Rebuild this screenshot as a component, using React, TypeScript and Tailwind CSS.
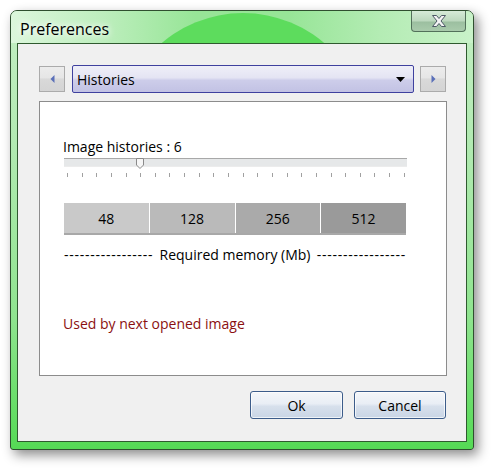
import React from "react";

const ticks = Array.from({ length: 24 }, (_, i) => i);

const sizes = [
  { label: "48", bg: "bg-[#c9c9c9]" },
  { label: "128", bg: "bg-[#bababa]" },
  { label: "256", bg: "bg-[#aaaaaa]" },
  { label: "512", bg: "bg-[#9a9a9a]" },
];

function ArrowButton({ dir }: { dir: "left" | "right" }) {
  return (
    <div className="w-[26px] h-[26px] border border-[#ababab] bg-[linear-gradient(180deg,#ececec_0%,#e6e6e6_45%,#d9d9d9_50%,#d4d4d4_100%)] flex items-center justify-center">
      <svg width="5" height="8" viewBox="0 0 5 8">
        {dir === "left" ? (
          <path d="M4.5 0 L0.5 4 L4.5 8 Z" fill="#5a6fb8" />
        ) : (
          <path d="M0.5 0 L4.5 4 L0.5 8 Z" fill="#5a6fb8" />
        )}
      </svg>
    </div>
  );
}

function DialogButton({ label, width }: { label: string; width: string }) {
  return (
    <button
      className={`${width} h-[28px] rounded-[3px] border border-[#3c5c8a] bg-[linear-gradient(180deg,#f4f6f9_0%,#e9eef5_45%,#d7e0ec_55%,#c9d5e5_100%)] shadow-[inset_0_0_0_1px_rgba(255,255,255,0.7)] text-[14px] text-black`}
    >
      {label}
    </button>
  );
}

export default function App() {
  return (
    <div className="w-[493px] h-[468px] bg-white font-['Open_Sans',sans-serif] pt-[10px] pl-[10px]">
      {/* window */}
      <div className="w-[464px] h-[440px] rounded-t-[7px] rounded-b-[3px] border border-[#2f4f2f] bg-[linear-gradient(180deg,#c3eec3_0%,#b2eab2_30%,#8fe48f_70%,#55da55_100%)] shadow-[4px_5px_12px_rgba(0,0,0,0.45)] flex flex-col">
        {/* title bar */}
        <div className="relative h-[32px] overflow-hidden rounded-t-[6px] bg-[linear-gradient(90deg,#dcf7dc_0%,#bdeebd_20%,#97e597_40%,#97e597_60%,#b4ecb4_80%,#c9f2c9_100%)]">
          <div className="absolute left-[107px] top-[2px] w-[250px] h-[250px] rounded-full bg-[#5ddc5d]" />
          <div className="relative flex items-center h-full pl-[9px]">
            <span className="text-[16px] leading-none text-black mt-[3px] [text-shadow:0_0_6px_#ffffff,0_0_8px_#ffffff]">
              Preferences
            </span>
          </div>
          {/* close button */}
          <div className="absolute right-[7px] top-0 w-[55px] h-[21px] rounded-b-[4px] border border-t-0 border-[#52705a] bg-[linear-gradient(180deg,#d6ebd8_0%,#bcd8be_50%,#9cbfa0_55%,#a9cbac_100%)] flex items-center justify-center">
            <svg width="18" height="14" viewBox="0 0 18 14">
              <path
                d="M2.5 1.5 L6.5 1.5 L9 4.5 L11.5 1.5 L15.5 1.5 L11 7 L15.5 12.5 L11.5 12.5 L9 9.5 L6.5 12.5 L2.5 12.5 L7 7 Z"
                fill="#f4f4f4"
                stroke="#4d5a66"
                strokeWidth="1"
                strokeLinejoin="round"
              />
            </svg>
          </div>
        </div>

        {/* client area */}
        <div className="mx-[6px] mb-[7px] flex-1 border border-[#2f5a2f] bg-[#f0f0f0] flex flex-col pt-[21px] pl-[21px] pr-[20px]">
          {/* combo row */}
          <div className="flex items-center">
            <ArrowButton dir="left" />
            <div className="ml-[7px] mr-[6px] w-[342px] h-[28px] rounded-[2px] border border-[#3f419f] bg-[linear-gradient(180deg,#efeff8_0%,#e4e4f3_45%,#cdcdea_55%,#c2c2e4_100%)] flex items-center justify-between pl-[4px] pr-[8px]">
              <span className="text-[14px] text-black">Histories</span>
              <svg width="9" height="5" viewBox="0 0 9 5">
                <path d="M0 0 L9 0 L4.5 5 Z" fill="#000" />
              </svg>
            </div>
            <ArrowButton dir="right" />
          </div>

          {/* panel */}
          <div className="mt-[8px] w-[408px] h-[275px] border border-[#8c8c8c] bg-white flex flex-col pl-[23px] pr-[39px]">
            <div className="mt-[36px] text-[14px] leading-[18px] text-black">Image histories : 6</div>

            {/* slider */}
            <div className="relative mt-[2px] ml-[1px] h-[9px] border-t border-[#a8a8a8] border-b border-b-[#ececec] bg-[#e6e8e9] w-[343px]">
              <svg className="absolute left-[72px] top-[-1px]" width="8" height="11" viewBox="0 0 8 11">
                <path d="M0.5 0.5 L7.5 0.5 L7.5 7 L4 10.5 L0.5 7 Z" fill="#f6f6f6" stroke="#8a8a8a" />
              </svg>
            </div>
            <div className="mt-[6px] ml-[1px] w-[341px] pl-[3px] flex justify-between">
              {ticks.map((t) => (
                <div key={t} className="w-px h-[4px] bg-[#a0a0a0]" />
              ))}
            </div>

            {/* memory bars */}
            <div className="mt-[26px] ml-[1px] w-[342px] flex border-b-2 border-[#a8a8a8]">
              {sizes.map((s, i) => (
                <div
                  key={s.label}
                  className={`flex-1 h-[30px] ${s.bg} ${i > 0 ? "border-l border-white" : ""} flex items-center justify-center text-[14px] text-black`}
                >
                  {s.label}
                </div>
              ))}
            </div>

            <div className="mt-[11px] ml-[1px] w-[342px] flex items-center justify-between text-[14px] leading-[18px] text-black whitespace-nowrap">
              <span className="tracking-[0.75px]">-----------------</span>
              <span>Required memory (Mb)</span>
              <span className="tracking-[0.75px]">-----------------</span>
            </div>

            <div className="mt-[51px] text-[14px] leading-[18px] text-[#8b1010]">Used by next opened image</div>
          </div>

          {/* buttons */}
          <div className="mt-[15px] flex justify-end gap-[11px]">
            <DialogButton label="Ok" width="w-[93px]" />
            <DialogButton label="Cancel" width="w-[92px]" />
          </div>
        </div>
      </div>
    </div>
  );
}
